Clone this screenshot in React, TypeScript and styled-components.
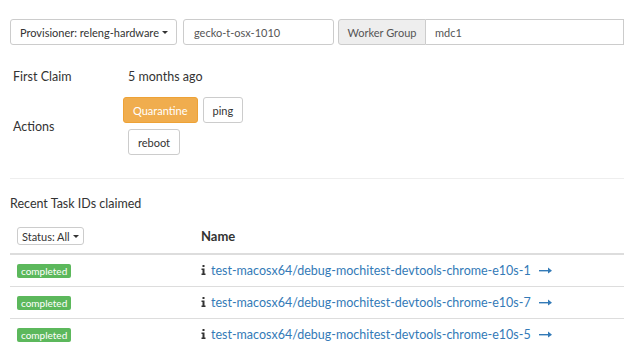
import styled, { createGlobalStyle } from "styled-components";

const GlobalStyle = createGlobalStyle`
  body {
    margin: 0;
    font-family: Lato, "Open Sans", sans-serif;
    font-size: 12px;
    color: #333;
    background: #fff;
  }
`;

const Page = styled.div`
  width: 624px;
  height: 345px;
  overflow: hidden;
  padding-left: 10px;
  box-sizing: border-box;
`;

const Toolbar = styled.div`
  display: flex;
  align-items: center;
  height: 26px;
  margin-top: 19px;
  column-gap: 6px;
  font-size: 11px;
`;

const DropdownButton = styled.button`
  height: 26px;
  padding: 0 8px 0 9px;
  font-family: inherit;
  font-size: 11px;
  color: #333;
  background: #fff;
  border: 1px solid #ccc;
  border-radius: 3px;
  display: flex;
  align-items: center;
  white-space: nowrap;
`;

const SmallDropdown = styled(DropdownButton)`
  height: 18px;
  padding: 0 4px;
`;

const Caret = styled.span`
  display: inline-block;
  width: 0;
  height: 0;
  margin-left: 3px;
  border-top: 3px solid #333;
  border-left: 3px solid transparent;
  border-right: 3px solid transparent;
`;

const TextInput = styled.div`
  height: 26px;
  box-sizing: border-box;
  width: 151px;
  padding: 0 10px;
  border: 1px solid #ccc;
  border-radius: 3px;
  display: flex;
  align-items: center;
  color: #555;
`;

const InputGroup = styled.div`
  display: flex;
  flex: 1;
  height: 26px;
  margin-left: -2px;
`;

const Addon = styled.div`
  box-sizing: border-box;
  width: 88px;
  display: flex;
  align-items: center;
  justify-content: center;
  background: #eee;
  border: 1px solid #ccc;
  border-radius: 3px 0 0 3px;
  color: #555;
`;

const GroupInput = styled.div`
  flex: 1;
  display: flex;
  align-items: center;
  padding-left: 9px;
  border: 1px solid #ccc;
  border-left: 0;
  color: #555;
`;

const Details = styled.div`
  display: grid;
  grid-template-columns: 110px 1fr;
  row-gap: 13px;
  margin-top: 24px;
  padding-left: 3px;
`;

const Label = styled.div`
  display: flex;
  align-items: center;
  font-size: 12.5px;
`;

const Value = styled.div<{ $indent?: number }>`
  display: flex;
  align-items: center;
  padding-left: ${(p) => p.$indent ?? 0}px;
  font-size: 12.5px;
`;

const Actions = styled.div`
  display: flex;
  flex-wrap: wrap;
  width: 126px;
  row-gap: 6px;
  column-gap: 5px;
`;

const ActionButton = styled.button<{ $warn?: boolean; $shift?: number }>`
  height: 26px;
  padding: 0 9px;
  font-family: inherit;
  font-size: 11px;
  border-radius: 3px;
  border: 1px solid ${(p) => (p.$warn ? "#eea236" : "#ccc")};
  background: ${(p) => (p.$warn ? "#f0ad4e" : "#fff")};
  color: ${(p) => (p.$warn ? "#fff" : "#333")};
  margin-left: ${(p) => p.$shift ?? 0}px;
`;

const Divider = styled.hr`
  border: 0;
  border-top: 1px solid #eee;
  margin: 23px 0 0;
`;

const SectionTitle = styled.div`
  margin-top: 17px;
  font-size: 12.5px;
`;

const Table = styled.table`
  margin-top: 8px;
  width: 100%;
  border-collapse: collapse;
`;

const HeadCell = styled.th<{ $width?: number }>`
  text-align: left;
  height: 34px;
  padding: 0 6px 0 7px;
  width: ${(p) => (p.$width ? `${p.$width}px` : "auto")};
  border-bottom: 2px solid #ddd;
  font-size: 13px;
  font-weight: bold;
  vertical-align: middle;
`;

const Cell = styled.td`
  height: 31px;
  padding: 0 6px 0 7px;
  border-top: 1px solid #ddd;
  vertical-align: middle;
`;

const Badge = styled.span`
  display: inline-block;
  padding: 0 4px;
  height: 14px;
  line-height: 14px;
  font-size: 10px;
  color: #fff;
  background: #5cb85c;
  border-radius: 2px;
`;

const TaskLink = styled.a`
  display: inline-flex;
  align-items: center;
  color: #337ab7;
  text-decoration: none;
  font-size: 12.5px;
  column-gap: 5px;
`;

const ArrowWrap = styled.span`
  display: inline-flex;
  margin-left: 3px;
`;

const InfoIcon = () => (
  <svg width="5" height="10" viewBox="0 0 5 10">
    <rect x="1.5" y="0" width="2" height="2" fill="#333" />
    <path d="M0.5 3.5 H3.5 V8.5 H4.5 V10 H0.5 V8.5 H1.5 V5 H0.5 Z" fill="#333" />
  </svg>
);

const LongArrow = () => (
  <ArrowWrap>
    <svg width="13" height="7" viewBox="0 0 13 7">
      <rect x="0" y="3" width="10" height="1.4" fill="#337ab7" />
      <path d="M9 0.5 L13 3.7 L9 6.5 Z" fill="#337ab7" />
    </svg>
  </ArrowWrap>
);

const tasks = [
  "test-macosx64/debug-mochitest-devtools-chrome-e10s-1",
  "test-macosx64/debug-mochitest-devtools-chrome-e10s-7",
  "test-macosx64/debug-mochitest-devtools-chrome-e10s-5",
];

const App: React.FC = () => {
  return (
    <Page>
      <GlobalStyle />
      <Toolbar>
        <DropdownButton>
          Provisioner: releng-hardware
          <Caret />
        </DropdownButton>
        <TextInput>gecko-t-osx-1010</TextInput>
        <InputGroup>
          <Addon>Worker Group</Addon>
          <GroupInput>mdc1</GroupInput>
        </InputGroup>
      </Toolbar>

      <Details>
        <Label>First Claim</Label>
        <Value $indent={5}>5 months ago</Value>
        <Label>Actions</Label>
        <Value>
          <Actions>
            <ActionButton $warn>Quarantine</ActionButton>
            <ActionButton>ping</ActionButton>
            <ActionButton $shift={5}>reboot</ActionButton>
          </Actions>
        </Value>
      </Details>

      <Divider />

      <SectionTitle>Recent Task IDs claimed</SectionTitle>
      <Table>
        <thead>
          <tr>
            <HeadCell $width={171}>
              <SmallDropdown>
                Status: All
                <Caret />
              </SmallDropdown>
            </HeadCell>
            <HeadCell>Name</HeadCell>
          </tr>
        </thead>
        <tbody>
          {tasks.map((t) => (
            <tr key={t}>
              <Cell>
                <Badge>completed</Badge>
              </Cell>
              <Cell>
                <TaskLink href="#">
                  <InfoIcon />
                  {t}
                  <LongArrow />
                </TaskLink>
              </Cell>
            </tr>
          ))}
        </tbody>
      </Table>
    </Page>
  );
};

export default App;
